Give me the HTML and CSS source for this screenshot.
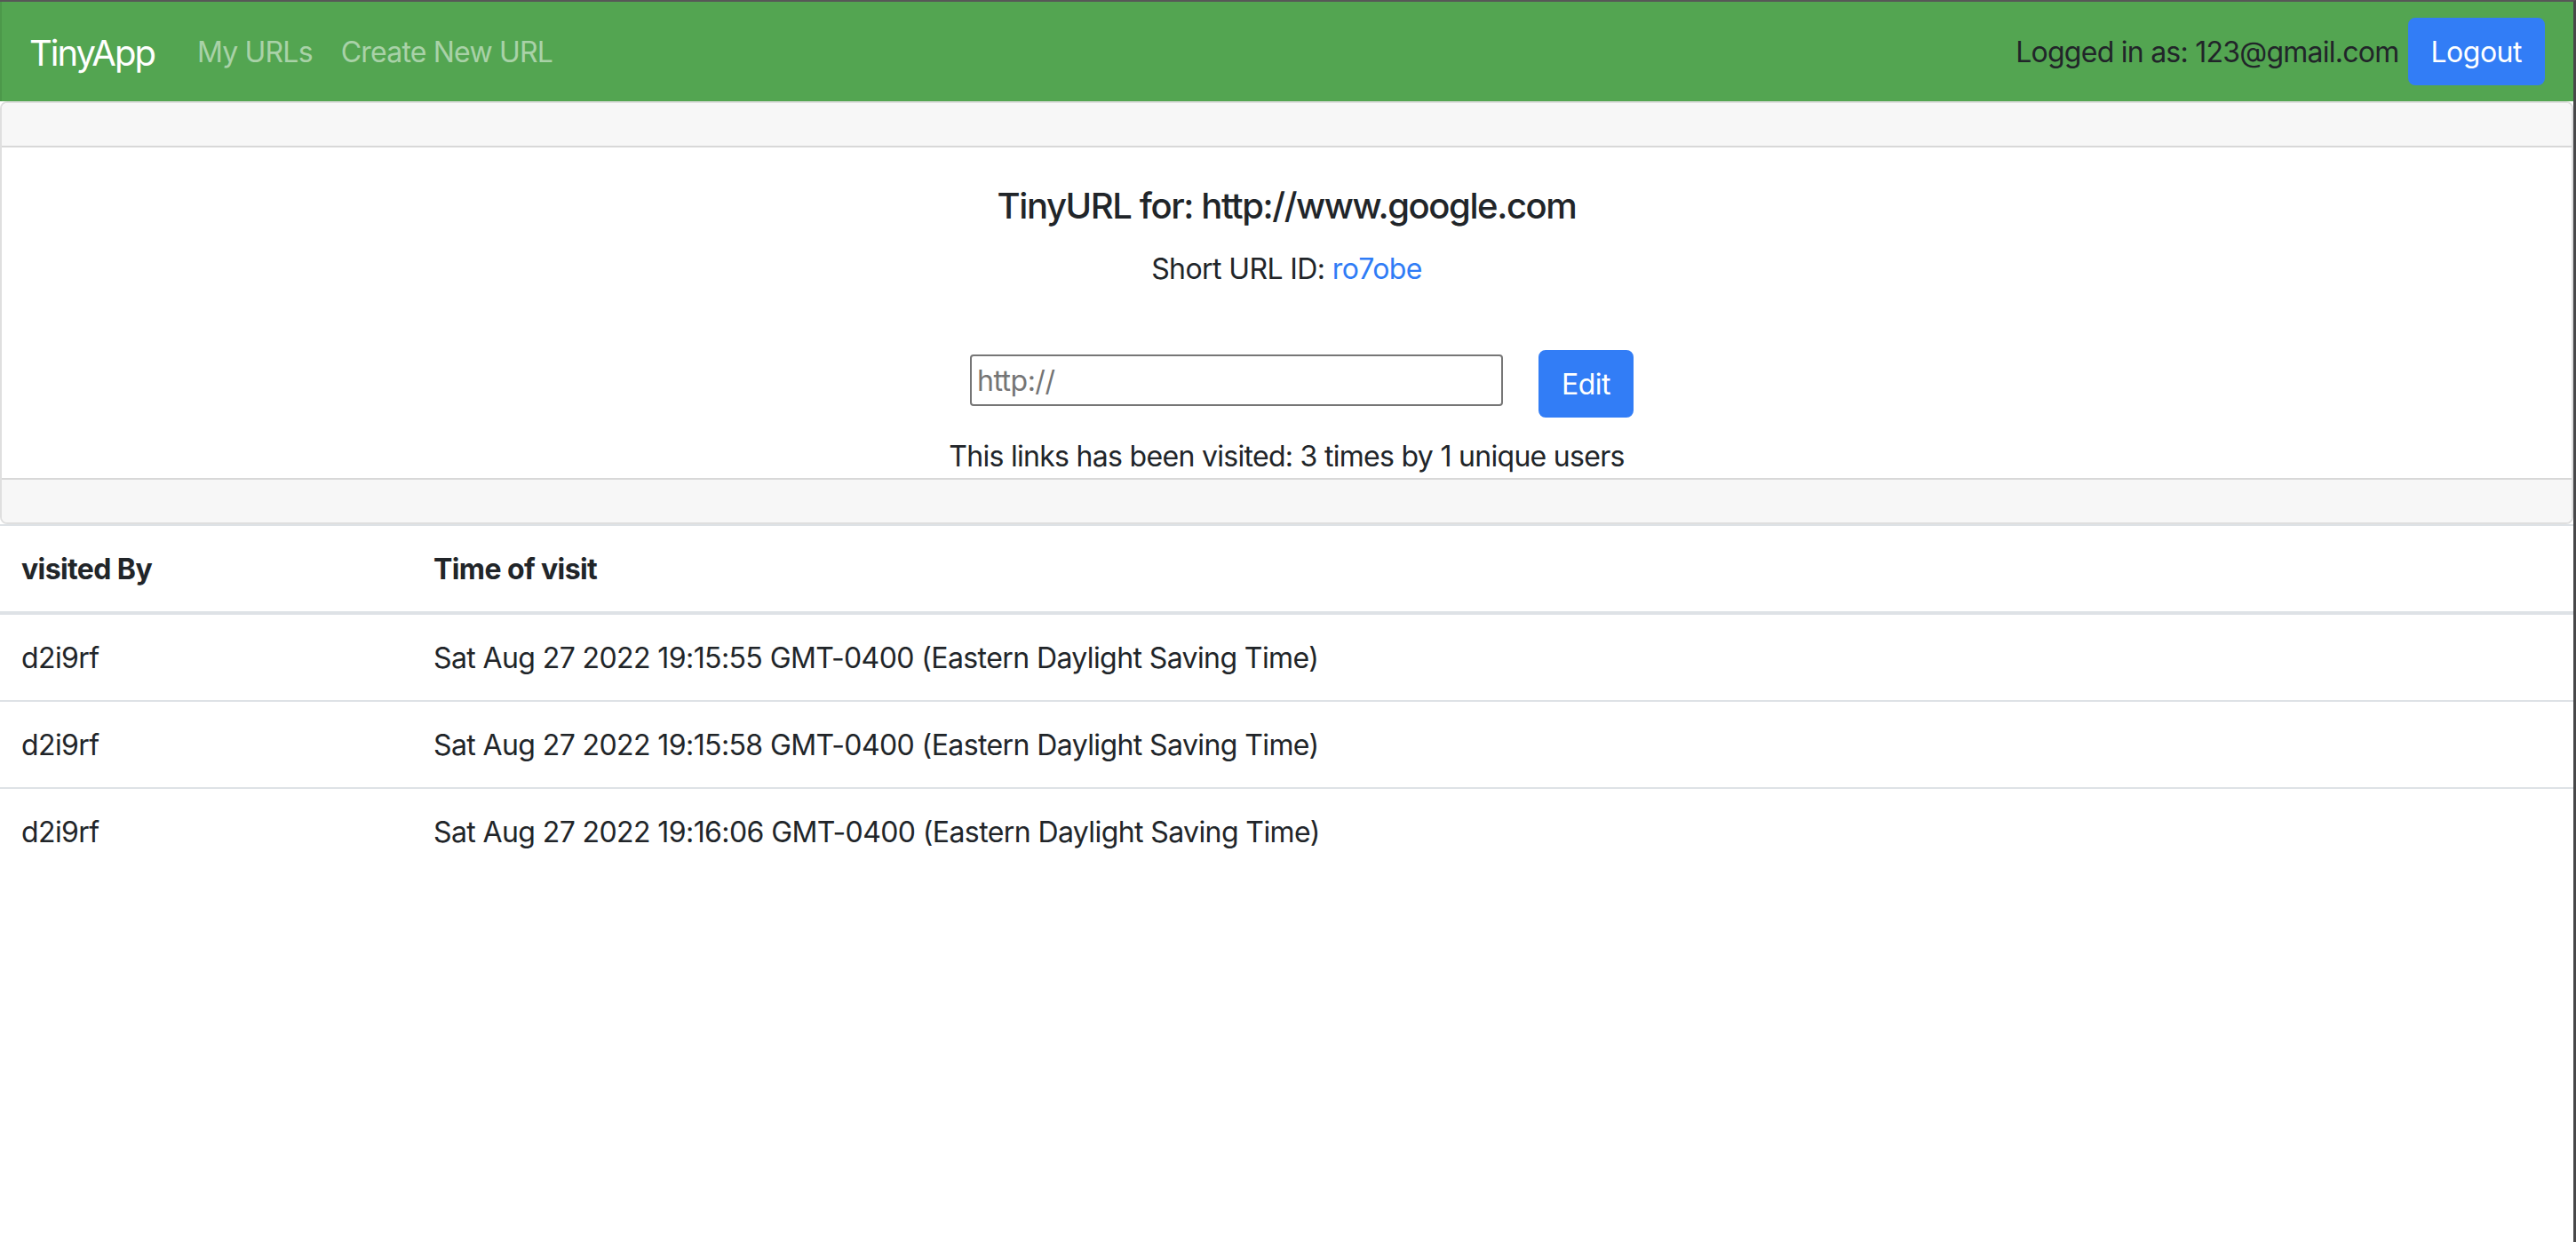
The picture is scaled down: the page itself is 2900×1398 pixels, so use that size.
FILE: index.html
```html
<!DOCTYPE html>
<html lang="en">
<head>
<meta charset="utf-8">
<title>TinyApp</title>
<link rel="stylesheet" href="styles.css">
</head>
<body>
<div class="frame">
  <nav class="navbar">
    <a class="brand" href="#">TinyApp</a>
    <div class="nav-links">
      <a class="nav-link" href="#">My URLs</a>
      <a class="nav-link" href="#">Create New URL</a>
    </div>
    <div class="nav-right">
      <span class="user">Logged in as: 123@gmail.com</span>
      <button class="btn" type="button">Logout</button>
    </div>
  </nav>

  <div class="card">
    <div class="card-header"></div>
    <div class="card-body">
      <h5 class="card-title">TinyURL for: http://www.google.com</h5>
      <p class="card-text">Short URL ID: <a class="link" href="#">ro7obe</a></p>
      <form class="edit-form">
        <input class="url-input" type="text" placeholder="http://">
        <button class="btn" type="button">Edit</button>
      </form>
      <div class="visits">This links has been visited: 3 times by 1 unique users</div>
    </div>
    <div class="card-footer"></div>
  </div>

  <table class="table">
    <colgroup><col class="col-by"><col></colgroup>
    <thead>
      <tr><th>visited By</th><th>Time of visit</th></tr>
    </thead>
    <tbody>
      <tr><td>d2i9rf</td><td>Sat Aug 27 2022 19:15:55 GMT-0400 (Eastern Daylight Saving Time)</td></tr>
      <tr><td>d2i9rf</td><td>Sat Aug 27 2022 19:15:58 GMT-0400 (Eastern Daylight Saving Time)</td></tr>
      <tr><td>d2i9rf</td><td>Sat Aug 27 2022 19:16:06 GMT-0400 (Eastern Daylight Saving Time)</td></tr>
    </tbody>
  </table>
</div>
</body>
</html>
```

FILE: styles.css
```css
* { box-sizing: border-box; }

html, body {
  margin: 0;
  padding: 0;
  background: #ffffff;
}

body {
  font-family: Inter, "Noto Sans", "Liberation Sans", sans-serif;
  font-size: 32px;
  line-height: 48px;
  letter-spacing: -0.65px;
  color: #212529;
}

.frame {
  min-height: 1398px;
  border-top: 2px solid #575757;
  border-right: 3px solid #48484a;
}

/* Navbar */
.navbar {
  display: flex;
  align-items: center;
  height: 112px;
  padding: 16px 32px 16px 33px;
  background: #53a551;
  box-shadow: inset 2px 0 0 rgba(0, 0, 0, 0.08);
}

.brand {
  font-size: 40px;
  line-height: 60px;
  padding: 12px 0 8px;
  margin-right: 32px;
  color: #ffffff;
  text-decoration: none;
  letter-spacing: -2px;
}

.nav-links {
  display: flex;
}

.nav-link {
  padding: 2px 16px 0;
  color: rgba(255, 255, 255, 0.5);
  text-decoration: none;
  letter-spacing: -0.8px;
}

.nav-right {
  margin-left: auto;
  display: flex;
  align-items: center;
  gap: 10px;
}

.user {
  letter-spacing: -0.75px;
  padding-top: 2px;
}

.btn {
  font-family: inherit;
  font-size: 32px;
  line-height: 48px;
  padding: 13px 24px 11px;
  border: 2px solid #327df6;
  border-radius: 8px;
  background: #327df6;
  color: #ffffff;
  cursor: pointer;
  letter-spacing: -0.5px;
}

/* Card */
.card {
  border: 2px solid rgba(0, 0, 0, 0.125);
  border-radius: 8px;
  overflow: hidden;
  display: flex;
  flex-direction: column;
}

.card-header {
  height: 50px;
  background: #f7f7f7;
  border-bottom: 2px solid rgba(0, 0, 0, 0.125);
}

.card-footer {
  height: 50px;
  background: #f7f7f7;
  border-top: 2px solid rgba(0, 0, 0, 0.125);
}

.card-body {
  padding: 42px 40px 0;
  text-align: center;
}

.card-title {
  margin: 0 0 23px;
  font-size: 40px;
  line-height: 48px;
  font-weight: 500;
  letter-spacing: -1.4px;
}

.card-text {
  margin: 0;
  letter-spacing: -0.6px;
}

.link {
  color: #2f7cf6;
  text-decoration: none;
}

.edit-form {
  margin: 67px 0 0;
  padding-left: 34px;
  display: flex;
  justify-content: center;
  align-items: flex-start;
  gap: 40px;
}

.url-input {
  width: 600px;
  height: 58px;
  margin-top: 5px;
  padding: 0 6px;
  border: 2px solid #767676;
  border-radius: 4px;
  font-family: inherit;
  font-size: 32px;
  letter-spacing: -0.5px;
  color: #212529;
  background: #ffffff;
}

.url-input::placeholder {
  color: #757575;
}

.visits {
  margin-top: 20px;
  letter-spacing: -0.7px;
}

/* Table */
.table {
  width: 100%;
  border-collapse: collapse;
  table-layout: fixed;
}

.col-by {
  width: 464px;
}

.table th,
.table td {
  padding: 25px 24px 23px;
  text-align: left;
  vertical-align: top;
  border-top: 2px solid #dee2e6;
  letter-spacing: -0.6px;
}

.table th {
  font-weight: 700;
  border-bottom: 4px solid #dee2e6;
}
```
